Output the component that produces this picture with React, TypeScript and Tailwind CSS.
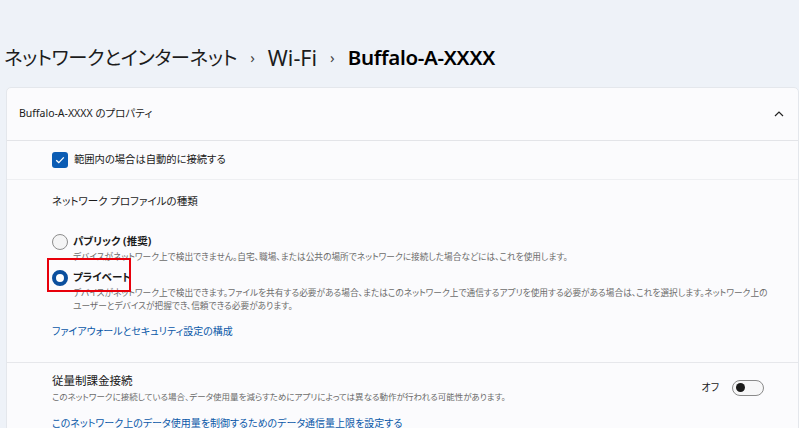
import React from "react";

const font = "font-['Noto_Sans','Noto_Sans_CJK_JP',sans-serif] [font-feature-settings:'palt']";

function Radio({ checked }: { checked?: boolean }) {
  return checked ? (
    <span className="w-4 h-4 rounded-full border-[4px] border-[#0b4f9e] bg-white shrink-0" />
  ) : (
    <span className="w-4 h-4 rounded-full border border-[#8d8d8d] bg-[#f4f4f5] shrink-0" />
  );
}

export default function App() {
  return (
    <div className={`${font} w-[799px] h-[428px] overflow-hidden bg-[#eef2f8] text-[#1a1a1a]`}>
      {/* パンくず */}
      <div className="h-[87px] flex items-center pl-[4px] pt-[28px] text-[21.5px] leading-none">
        <span className="text-[19.3px] text-[#1c1c1c] tracking-[-0.3px]">ネットワークとインターネット</span>
        <span className="mx-[13px] text-[15px] text-[#444]">›</span>
        <span className="text-[#1c1c1c]">Wi-Fi</span>
        <span className="mx-[13px] text-[15px] text-[#444]">›</span>
        <span className="font-semibold text-black text-[20.5px] tracking-[-0.3px]">Buffalo-A-XXXX</span>
      </div>

      {/* プロパティ カード */}
      <div className="ml-[6px] rounded-t-[5px] border border-[#e4e7ec] bg-[#fbfbfd]">
        <div className="h-[53px] flex items-center justify-between pl-[12px] pr-[14px] border-b border-[#e3e4e8]">
          <span className="text-[10.5px]">Buffalo-A-XXXX のプロパティ</span>
          <svg width="10" height="6" viewBox="0 0 10 6">
            <path d="M1 5 L5 1 L9 5" fill="none" stroke="#222" strokeWidth="1.2" />
          </svg>
        </div>

        <div className="h-[39px] flex items-center pl-[45px] border-b border-[#eeeff2]">
          <span className="w-4 h-4 rounded-[3px] bg-[#0b5cb4] flex items-center justify-center shrink-0">
            <svg width="10" height="8" viewBox="0 0 10 8">
              <path d="M1.2 4.2 L3.8 6.6 L8.8 1.4" fill="none" stroke="white" strokeWidth="1.3" />
            </svg>
          </span>
          <span className="ml-[6px] text-[10.3px]">範囲内の場合は自動的に接続する</span>
        </div>

        <div className="relative h-[183px] pl-[45px] border-b border-[#e6e7eb]">
          <div className="pt-[13px] text-[10.5px] leading-[16px]">ネットワーク プロファイルの種類</div>

          <div className="mt-[24px] flex items-center h-[18px]">
            <Radio />
            <span className="ml-[5px] text-[10.5px] font-bold">パブリック (推奨)</span>
          </div>
          <div className="pl-[21px] text-[8.7px] leading-[12px] text-[#6b6b6b] whitespace-nowrap">
            デバイスがネットワーク上で検出できません。自宅、職場、または公共の場所でネットワークに接続した場合などには、これを使用します。
          </div>

          <div className="mt-[6px] flex items-center h-[18px]">
            <Radio checked />
            <span className="ml-[5px] text-[10.5px] font-bold">プライベート</span>
          </div>
          <div className="pl-[21px] text-[8.7px] leading-[13px] text-[#6b6b6b] whitespace-nowrap">
            デバイスがネットワーク上で検出できます。ファイルを共有する必要がある場合、またはこのネットワーク上で通信するアプリを使用する必要がある場合は、これを選択します。ネットワーク上の
            <br />
            ユーザーとデバイスが把握でき、信頼できる必要があります。
          </div>

          <div className="mt-[11px] text-[10px] text-[#0a58a8]">ファイアウォールとセキュリティ設定の構成</div>

          {/* 注釈枠 */}
          <div className="absolute left-[40px] top-[78px] w-[84px] h-[34px] border-2 border-[#e8000b]" />
        </div>

        <div className="pl-[45px] pr-[34px]">
          <div className="flex items-center justify-between pt-[9px]">
            <div>
              <div className="text-[11.5px] leading-[17px]">従量制課金接続</div>
              <div className="mt-[1px] text-[8.5px] leading-[13px] text-[#6b6b6b] whitespace-nowrap">
                このネットワークに接続している場合、データ使用量を減らすためにアプリによっては異なる動作が行われる可能性があります。
              </div>
            </div>
            <div className="flex items-center gap-[13px]">
              <span className="text-[10px]">オフ</span>
              <span className="w-[32px] h-[16px] rounded-full border border-[#8a8a8a] bg-[#f7f7f8] flex items-center pl-[3px]">
                <span className="w-[9px] h-[9px] rounded-full bg-[#1a1a1a]" />
              </span>
            </div>
          </div>
          <div className="mt-[13px] text-[10px] text-[#0a58a8] whitespace-nowrap">
            このネットワーク上のデータ使用量を制御するためのデータ通信量上限を設定する
          </div>
        </div>
      </div>
    </div>
  );
}
